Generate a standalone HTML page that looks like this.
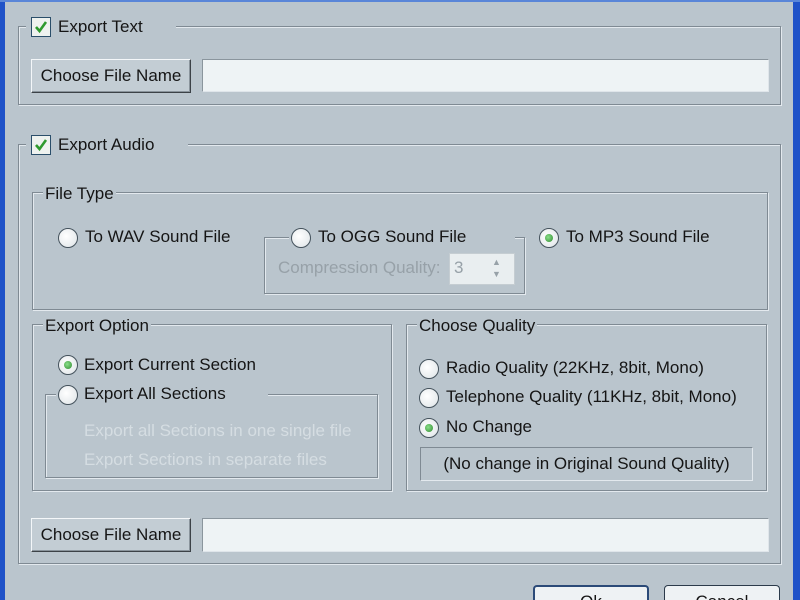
<!DOCTYPE html>
<html style="width:800px;height:600px;overflow:hidden"><head><meta charset="utf-8"><style>
*{margin:0;padding:0;box-sizing:border-box}
body{width:800px;height:600px;overflow:hidden;background:#bac5cd;font-family:"Liberation Sans",sans-serif;font-size:17px;color:#151515;position:relative}
.a{position:absolute}
.t{position:absolute;white-space:nowrap;line-height:20px;background:#bac5cd;padding:0 2px}
.fr{position:absolute;border:1px solid #7f8a93;box-shadow:1px 1px 0 #e3e9ee, inset 1px 1px 0 #e3e9ee}
.btn{position:absolute;background:#c3cdd4;border:1px solid #f4f7f9;border-right-color:#3c4247;border-bottom-color:#3c4247;box-shadow:inset -1px -1px 0 #8a949c;text-align:center;line-height:31px}
.tf{position:absolute;background:#eef3f5;border:1px solid #8a959d;border-right-color:#dfe5ea;border-bottom-color:#dfe5ea}
.cb{position:absolute;width:20px;height:20px;border:1px solid #2a4e6a;background:#eef2ef}
.rd{position:absolute;width:20px;height:20px;border-radius:50%;border:1px solid #44525c;background:radial-gradient(circle at 40% 40%,#fff,#dde3e6)}
.rd.on::after{content:"";position:absolute;left:5px;top:5px;width:8px;height:8px;border-radius:50%;background:radial-gradient(circle at 40% 40%,#8be08b,#2f8a2f)}
.dis{color:#d5dde2}
.gr{color:#97a1a8}
</style></head><body>
<div class="a" style="left:0;top:0;width:5px;height:600px;background:#1f52c8"></div>
<div class="a" style="left:793px;top:0;width:7px;height:600px;background:#1f52c8"></div>
<div class="a" style="left:0;top:0;width:800px;height:2px;background:#5a86d8"></div>

<div class="fr" style="left:18px;top:26px;width:763px;height:79px"></div>
<div class="a" style="left:26px;top:16px;width:150px;height:22px;background:#bac5cd"></div>
<div class="cb" style="left:31px;top:17px"><svg width="18" height="18"><path d="M4 9 L7.5 13 L14 4" stroke="#2e9a2e" stroke-width="2.6" fill="none"/></svg></div>
<div class="t" style="left:56px;top:17px">Export Text</div>
<div class="btn" style="left:31px;top:59px;width:160px;height:34px">Choose File Name</div>
<div class="tf" style="left:202px;top:59px;width:567px;height:33px"></div>

<div class="fr" style="left:18px;top:144px;width:763px;height:420px"></div>
<div class="a" style="left:26px;top:134px;width:162px;height:22px;background:#bac5cd"></div>
<div class="cb" style="left:31px;top:135px"><svg width="18" height="18"><path d="M4 9 L7.5 13 L14 4" stroke="#2e9a2e" stroke-width="2.6" fill="none"/></svg></div>
<div class="t" style="left:56px;top:135px">Export Audio</div>

<div class="fr" style="left:32px;top:192px;width:736px;height:118px"></div>
<div class="t" style="left:43px;top:184px">File Type</div>
<div class="rd" style="left:58px;top:228px"></div>
<div class="t" style="left:83px;top:227px">To WAV Sound File</div>
<div class="fr" style="left:264px;top:237px;width:261px;height:57px"></div>
<div class="a" style="left:289px;top:226px;width:226px;height:22px;background:#bac5cd"></div>
<div class="rd" style="left:291px;top:228px"></div>
<div class="t" style="left:316px;top:227px">To OGG Sound File</div>
<div class="t gr" style="left:276px;top:258px">Compression Quality:</div>
<div class="a" style="left:449px;top:253px;width:66px;height:32px;background:#e9eef0;border:1px solid #c5cdd2"></div>
<div class="t gr" style="left:452px;top:258px;background:none">3</div>
<div class="a gr" style="left:492px;top:256px;font-size:9px;line-height:12px">▲<br>▼</div>
<div class="rd on" style="left:539px;top:228px"></div>
<div class="t" style="left:564px;top:227px">To MP3 Sound File</div>

<div class="fr" style="left:32px;top:324px;width:360px;height:167px"></div>
<div class="t" style="left:43px;top:316px">Export Option</div>
<div class="rd on" style="left:58px;top:355px"></div>
<div class="t" style="left:82px;top:355px">Export Current Section</div>
<div class="fr" style="left:45px;top:394px;width:333px;height:84px"></div>
<div class="a" style="left:56px;top:383px;width:212px;height:22px;background:#bac5cd"></div>
<div class="rd" style="left:58px;top:385px"></div>
<div class="t" style="left:82px;top:384px">Export All Sections</div>
<div class="t dis" style="left:82px;top:421px">Export all Sections in one single file</div>
<div class="t dis" style="left:82px;top:450px">Export Sections in separate files</div>

<div class="fr" style="left:406px;top:324px;width:361px;height:167px"></div>
<div class="t" style="left:417px;top:316px">Choose Quality</div>
<div class="rd" style="left:419px;top:359px"></div>
<div class="t" style="left:444px;top:358px">Radio Quality (22KHz, 8bit, Mono)</div>
<div class="rd" style="left:419px;top:388px"></div>
<div class="t" style="left:444px;top:387px">Telephone Quality (11KHz, 8bit, Mono)</div>
<div class="rd on" style="left:419px;top:418px"></div>
<div class="t" style="left:444px;top:417px">No Change</div>
<div class="a" style="left:420px;top:447px;width:333px;height:34px;border:1px solid #7f8a93;border-right-color:#e3e9ee;border-bottom-color:#e3e9ee;text-align:center;line-height:32px">(No change in Original Sound Quality)</div>

<div class="btn" style="left:31px;top:518px;width:160px;height:34px">Choose File Name</div>
<div class="tf" style="left:202px;top:518px;width:567px;height:34px"></div>

<div class="a" style="left:533px;top:585px;width:116px;height:15px;border:2px solid #2b4a78;border-bottom:none;border-radius:4px 4px 0 0;background:#eef2f4;text-align:center;line-height:20px;padding-top:5px;overflow:hidden">Ok</div>
<div class="a" style="left:664px;top:585px;width:116px;height:15px;border:1px solid #2b3a4a;border-bottom:none;border-radius:4px 4px 0 0;background:#eef2f4;text-align:center;line-height:20px;padding-top:6px;overflow:hidden">Cancel</div>
</body></html>
